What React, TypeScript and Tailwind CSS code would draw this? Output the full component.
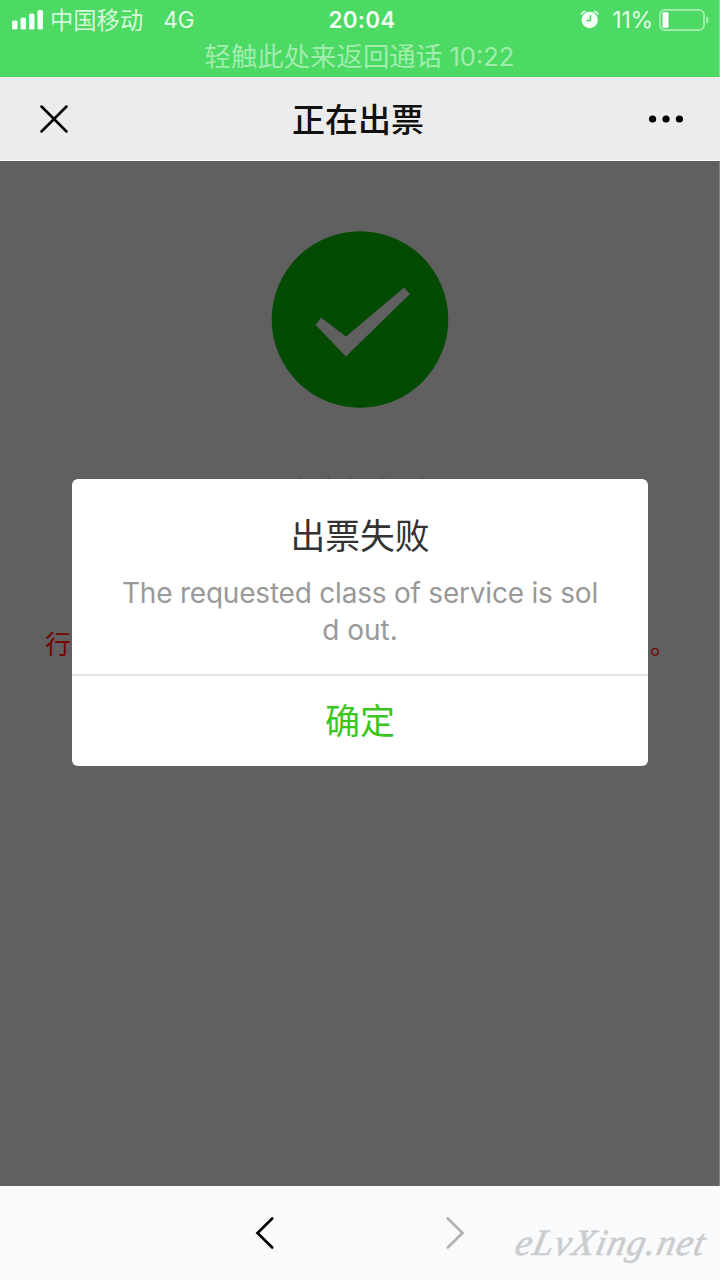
import React from 'react';

function SignalBars() {
  return (
    <svg className="h-5 w-8 shrink-0" viewBox="0 0 32 20" fill="#f4fff5">
      <rect x="0" y="10.5" width="5.5" height="9" rx="1.6" />
      <rect x="8.5" y="7.5" width="5.5" height="12" rx="1.6" />
      <rect x="17" y="3.5" width="5.5" height="16" rx="1.6" />
      <rect x="25.5" y="0" width="5.5" height="19.5" rx="1.6" />
    </svg>
  );
}

function AlarmIcon() {
  return (
    <svg className="h-5 w-5 shrink-0" viewBox="0 0 20 20" fill="none">
      <circle cx="9.7" cy="10" r="8.2" fill="#f4fff5" />
      <path d="M1.6 3.9Q2.6 2 4.9 1.6M17.9 3.9Q16.9 2 14.6 1.6" stroke="#dcfbe0" strokeWidth="2" strokeLinecap="round" />
      <path d="M10.4 5v5.5H6.4" stroke="#4cd964" strokeWidth="1.5" />
    </svg>
  );
}

function BatteryIcon() {
  return (
    <svg className="h-[22px] w-[51px] shrink-0" viewBox="0 0 51 22" fill="none">
      <rect x="1" y="0.9" width="44" height="20.2" rx="5" stroke="#a7eeb1" strokeWidth="1.7" />
      <path d="M47.2 7.2c3 1 3 6.6 0 7.6z" fill="#a7eeb1" />
      <rect x="3.5" y="3.3" width="6" height="15.4" rx="1.2" fill="#fff" />
    </svg>
  );
}

function StatusBar() {
  return (
    <header className="h-[77px] shrink-0 border-r border-[#86e395] bg-[#4cd964] text-[#e4fce7]">
      <div className="grid h-10 grid-cols-3 items-center pr-[9px] pl-3">
        <div className="flex items-center">
          <SignalBars />
          <span className="ml-[6px] pt-0.5 text-[23.3px] whitespace-nowrap text-[#d5f9da]">中国移动</span>
          <span className="ml-[20px] text-[22.5px]">4G</span>
        </div>
        <span className="pl-0.5 text-center text-[22.5px] font-semibold tracking-[0.2px] text-[#f0fff1]">20:04</span>
        <div className="flex items-center justify-end">
          <AlarmIcon />
          <span className="mr-[6px] ml-[12px] text-[23px] tracking-[-0.2px]">11%</span>
          <BatteryIcon />
        </div>
      </div>
      <p className="text-center text-[26.4px] leading-[33px] text-[#a0edac]">
        轻触此处来返回通话 <span className="text-[25.5px]">10:22</span>
      </p>
    </header>
  );
}

function TitleBar() {
  return (
    <div className="flex h-[84px] shrink-0 items-center justify-between border-b border-white bg-[#ececec] pr-9 pl-10">
      <svg className="h-7 w-7" viewBox="0 0 28 28" stroke="#000" strokeWidth="2.5" strokeLinecap="round">
        <path d="M1.5 1.5 26.5 26.5M26.5 1.5 1.5 26.5" />
      </svg>
      <h1 className="pt-1 text-[33px] leading-none font-medium text-[#111]">正在出票</h1>
      <svg className="h-2 w-9" viewBox="0 0 36 8">
        <circle cx="4.6" cy="4" r="3.6" />
        <circle cx="18" cy="4" r="3.6" />
        <circle cx="31.4" cy="4" r="3.6" />
      </svg>
    </div>
  );
}

function Dialog() {
  return (
    <section role="dialog" className="absolute top-[318px] left-[72px] flex h-[287px] w-[576px] flex-col overflow-hidden rounded-[6px] bg-white text-center">
      <div className="flex h-[195px] flex-col items-center pt-[37px]">
        <h2 className="text-[34.8px] leading-10 text-[#333]">出票失败</h2>
        <p className="mt-[19px] text-[28px] leading-[37px] text-[#999]">
          <span className="tracking-[-0.21px] whitespace-nowrap">The requested class of service is sol</span>
          <br />
          d out.
        </p>
      </div>
      <button className="h-[92px] border-t-2 border-[#e5e5e5] text-[35px] text-[#3cc51f]">确定</button>
    </section>
  );
}

function ResultPage() {
  return (
    <main className="relative flex h-[1025px] shrink-0 flex-col items-center border-r border-[#858585] bg-[#606060] pt-[70px]">
      <svg className="h-[177px] w-[178px]" viewBox="0 0 178 177">
        <circle cx="89" cy="88.5" r="88.3" fill="#034b02" />
        <path d="M45 94 50 87 75 106 133 57 138.500 63 75 125Z" fill="#606060" stroke="#606060" strokeWidth="0.8" strokeLinejoin="round" />
      </svg>
      <div className="mt-[219px] flex w-full justify-between pr-[43px] pl-[45px] text-[26px] leading-9 text-[#740606]">
        <span>行</span>
        <span>。</span>
      </div>
      <svg className="absolute top-[317px] left-[298px] h-px w-[128px]" viewBox="0 0 128 1" fill="#464646">
        <path d="M0 0h3v1h-3zM29 0h3v1h-3zM50 0h3v1h-3zM83 0h4v1h-4zM123 0h3v1h-3z" />
      </svg>
      <Dialog />
    </main>
  );
}

function BrowserBar() {
  return (
    <footer className="flex h-[94px] shrink-0 items-start bg-[#f9fafc] pl-[255px]">
      <svg className="mt-[30px] h-[34px] w-5 shrink-0" viewBox="0 0 20 34" fill="none" stroke="#000" strokeWidth="2.7" strokeLinecap="round">
        <path d="M17.2 2.5 2.5 17 17.2 31.5" />
      </svg>
      <svg className="mt-[30px] ml-[170px] h-[34px] w-5 shrink-0" viewBox="0 0 20 34" fill="none" stroke="#b2b2b2" strokeWidth="2.7" strokeLinecap="round">
        <path d="M2.8 2.5 17.5 17 2.8 31.500" />
      </svg>
      <span className="mt-[33px] ml-[46px] origin-bottom-left -skew-x-12 font-['Liberation_Serif',serif] text-[37px] leading-[48px] tracking-[1.1px] whitespace-nowrap text-[#cbcccd] italic [-webkit-text-stroke:0.6px_#cbcccd]">
        eLvXing.net
      </span>
    </footer>
  );
}

export default function App() {
  return (
    <div className="flex h-[1280px] w-[720px] flex-col overflow-hidden font-['Inter','Noto_Sans_CJK_SC',sans-serif]">
      <StatusBar />
      <TitleBar />
      <ResultPage />
      <BrowserBar />
    </div>
  );
}
